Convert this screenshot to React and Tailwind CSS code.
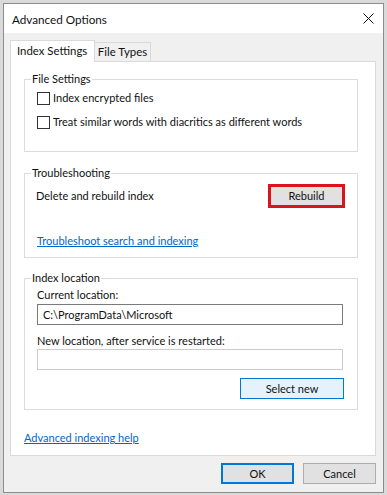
import React from "react";

function Checkbox({ label }) {
  return (
    <div className="flex items-center h-[20px]">
      <span className="w-[13px] h-[13px] border border-[#333333] bg-white shrink-0" />
      <span className="ml-[3px] whitespace-nowrap">{label}</span>
    </div>
  );
}

function Group({ title, className = "", children }) {
  return (
    <fieldset className={"border border-[#dcdcdc] pl-[12px] pr-[12px] " + className}>
      <legend className="ml-[-6px] px-[1px] leading-[16px] whitespace-nowrap">{title}</legend>
      {children}
    </fieldset>
  );
}

export default function App() {
  return (
    <div className="w-[387px] h-[495px] bg-[#dadada] pt-[3px] px-[3px] pb-[2px] text-[11px] leading-[16px] text-[#111111] font-['Lato',sans-serif] whitespace-nowrap">
      <div className="h-full border border-[#8c8c8c] bg-[#f0f0f0] flex flex-col">
        {/* Title bar */}
        <div className="h-[29px] bg-white flex items-center justify-between pl-[8px] pr-[9px] shrink-0">
          <span className="text-[11.7px]">Advanced Options</span>
          <svg width="11" height="11" viewBox="0 0 11 11" className="mt-[-1px]">
            <path d="M0.5 0.5 L10.5 10.5 M10.5 0.5 L0.5 10.5" stroke="#111" strokeWidth="1" fill="none" />
          </svg>
        </div>

        {/* Body */}
        <div className="flex-1 flex flex-col pl-[6px] pr-[7px] pt-[7px] pb-[8px]">
          {/* Tabs */}
          <div className="flex items-end h-[21px] shrink-0">
            <div className="relative z-10 w-[85px] h-[22px] mb-[-1px] bg-white border-t border-x border-[#d9d9d9] flex items-center pl-[6px] pb-[2px] text-[11.4px]">
              Index Settings
            </div>
            <div className="w-[56px] h-[19px] bg-[#f0f0f0] border-t border-r border-[#d9d9d9] flex items-center justify-center text-[11.4px]">
              File Types
            </div>
          </div>

          {/* Panel */}
          <div className="flex-1 bg-white border border-[#d9d9d9] pt-[9px] pl-[13px] pr-[17px] flex flex-col">
            <Group title="File Settings" className="pt-[1px] pb-[19px]">
              <div className="flex flex-col gap-[4px]">
                <Checkbox label="Index encrypted files" />
                <Checkbox label="Treat similar words with diacritics as different words" />
              </div>
            </Group>

            <Group title="Troubleshooting" className="mt-[13px] pt-[3px] pb-[8px]">
              <div className="flex items-center justify-between h-[24px]">
                <span className="ml-[-1px]">Delete and rebuild index</span>
                <button className="w-[77px] h-[24px] border-[3px] border-[#d9141c] bg-[#e1e1e1] flex items-center justify-center">
                  Rebuild
                </button>
              </div>
              <div className="mt-[25px]">
                <a className="text-[#0066cc] underline">Troubleshoot search and indexing</a>
              </div>
            </Group>

            <Group title="Index location" className="mt-[12px] pt-[1px] pb-[10px]">
              <div>Current location:</div>
              <div className="mt-[1px] h-[21px] w-[306px] border border-[#7a7a7a] bg-white flex items-center pl-[5px]">
                C:\ProgramData\Microsoft
              </div>
              <div className="mt-[8px]">New location, after service is restarted:</div>
              <div className="h-[21px] w-[306px] border border-[#cccccc] bg-white" />
              <div className="mt-[8px] flex justify-end pr-[1px]">
                <button className="w-[104px] h-[21px] border border-[#0078d7] bg-[#e5f1fb] flex items-center justify-center">
                  Select new
                </button>
              </div>
            </Group>

            <div className="mt-[20px]">
              <a className="text-[#0066cc] underline">Advanced indexing help</a>
            </div>
          </div>

          {/* Buttons */}
          <div className="flex justify-end gap-[9px] mt-[7px] shrink-0">
            <button className="w-[73px] h-[21px] border-2 border-[#0078d7] bg-[#e1e1e1] flex items-center justify-center">
              OK
            </button>
            <button className="w-[73px] h-[21px] border border-[#adadad] bg-[#e1e1e1] flex items-center justify-center">
              Cancel
            </button>
          </div>
        </div>
      </div>
    </div>
  );
}
